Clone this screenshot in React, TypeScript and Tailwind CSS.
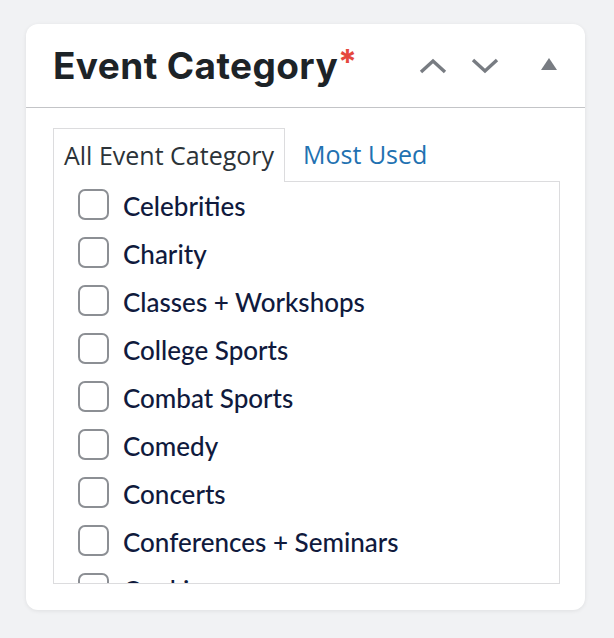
import { useState } from "react";

const categories = [
  "Celebrities",
  "Charity",
  "Classes + Workshops",
  "College Sports",
  "Combat Sports",
  "Comedy",
  "Concerts",
  "Conferences + Seminars",
  "Cooking",
  "Dance",
];

export default function App() {
  const [tab, setTab] = useState("all");
  const [checked, setChecked] = useState<Record<string, boolean>>({});

  return (
    <div className="min-h-screen bg-[#f1f2f4] pt-[24px] pl-[26px]">
      <div className="w-[559px] h-[586px] bg-white rounded-[12px] shadow-[0_1px_4px_rgba(0,0,0,0.08)] flex flex-col">
        <div className="h-[84px] flex items-center justify-between pl-[27px] pr-[28px] border-b border-[#c3c4c7]">
          <h2 className="font-['Inter',sans-serif] font-bold text-[37px] text-[#1d2327] leading-none tracking-[0.4px] flex items-start">
            Event Category
            <span className="text-[#e5483d] text-[34px] leading-none -mt-[2px]">*</span>
          </h2>
          <div className="flex items-center gap-[24px] text-[#787c82]">
            <svg width="28" height="16" viewBox="0 0 28 16" fill="none">
              <path d="M2 14L14 3L26 14" stroke="currentColor" strokeWidth="3.4" />
            </svg>
            <svg width="28" height="16" viewBox="0 0 28 16" fill="none">
              <path d="M2 2L14 13L26 2" stroke="currentColor" strokeWidth="3.4" />
            </svg>
            <svg width="16" height="12" viewBox="0 0 16 12" className="ml-[18px] mb-[4px]">
              <path d="M8 0L16 12H0Z" fill="currentColor" />
            </svg>
          </div>
        </div>

        <div className="px-[27px] pt-[20px]">
          <div className="flex font-['Open_Sans',sans-serif] text-[25px] leading-none">
            <button
              onClick={() => setTab("all")}
              className={`h-[54px] px-[10px] border border-b-0 border-[#dcdcde] bg-white relative -mb-px z-10 ${
                tab === "all" ? "text-[#2c3338]" : "text-[#2271b1]"
              }`}
            >
              All Event Category
            </button>
            <button
              onClick={() => setTab("used")}
              className="h-[53px] px-[18px] text-[#2271b1]"
            >
              Most Used
            </button>
          </div>
          <div className="w-[507px] h-[403px] border border-[#dcdcde] overflow-hidden pl-[24px]">
            {categories.map((c) => (
              <label key={c} className="h-[48px] flex items-center gap-[14px] cursor-pointer">
                <input
                  type="checkbox"
                  checked={!!checked[c]}
                  onChange={() => setChecked({ ...checked, [c]: !checked[c] })}
                  className="appearance-none w-[31px] h-[31px] rounded-[7px] border-2 border-[#8c8f94] bg-white shrink-0 -mt-[3px]"
                />
                <span className="font-['Lato',sans-serif] font-medium text-[26px] text-[#101a3d] leading-none">
                  {c}
                </span>
              </label>
            ))}
          </div>
        </div>
      </div>
    </div>
  );
}
